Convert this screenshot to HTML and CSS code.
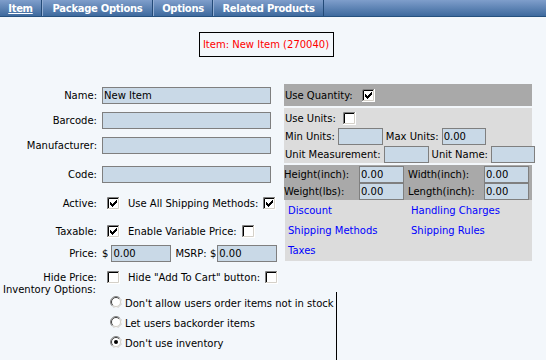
FILE: index.html
```html
<!DOCTYPE html>
<html>
<head>
<meta charset="utf-8">
<title>Item</title>
<link rel="stylesheet" href="styles.css">
</head>
<body>
<nav class="tabs">
  <a class="tab tab-item current" href="#">Item</a>
  <a class="tab tab-pkg" href="#">Package Options</a>
  <a class="tab tab-opt" href="#">Options</a>
  <a class="tab tab-rel" href="#">Related Products</a>
</nav>

<div class="title-row"><div class="title-box">Item: New Item (270040)</div></div>

<div class="main">
  <div class="left">
    <div class="row gap-3"><span class="lbl">Name:</span><input class="txt w169" value="New Item"></div>
    <div class="row gap-8"><span class="lbl">Barcode:</span><input class="txt w169" value=""></div>
    <div class="row gap-8"><span class="lbl">Manufacturer:</span><input class="txt w169" value=""></div>
    <div class="row gap-12"><span class="lbl">Code:</span><input class="txt w169" value=""></div>
    <div class="row gap-12"><span class="lbl">Active:</span>
      <svg class="cb first" viewBox="0 0 13 13"><use href="#cb-on"/></svg>
      <span class="after">Use All Shipping Methods:</span>
      <svg class="cb last" viewBox="0 0 13 13"><use href="#cb-on"/></svg>
    </div>
    <div class="row gap-11"><span class="lbl">Taxable:</span>
      <svg class="cb first" viewBox="0 0 13 13"><use href="#cb-on"/></svg>
      <span class="after">Enable Variable Price:</span>
      <svg class="cb last" viewBox="0 0 13 13"><use href="#cb-off"/></svg>
    </div>
    <div class="row gap-5"><span class="lbl">Price:</span>
      <span>$</span><input class="txt w60 cur" value="0.00">
      <span class="msrp">MSRP: $</span><input class="txt w60 cur2" value="0.00">
    </div>
    <div class="row gap-7"><span class="lbl">Hide Price:</span>
      <svg class="cb first" viewBox="0 0 13 13"><use href="#cb-off"/></svg>
      <span class="after">Hide "Add To Cart" button:</span>
      <svg class="cb last" viewBox="0 0 13 13"><use href="#cb-off"/></svg>
    </div>
  </div>

  <div class="right">
    <div class="band-dark band-q">Use Quantity:<svg class="cb q" viewBox="0 0 13 13"><use href="#cb-on"/></svg></div>
    <div class="band-light band-u">
      <div class="urow urow1">Use Units:<svg class="cb u" viewBox="0 0 13 13"><use href="#cb-off"/></svg></div>
      <div class="urow urow2">Min Units:<input class="txt w45 in" value=""><span class="sp">Max Units:</span><input class="txt w44 in" value="0.00"></div>
      <div class="urow urow3">Unit Measurement:<input class="txt w45 in" value=""><span class="sp">Unit Name:</span><input class="txt w44 in" value=""></div>
    </div>
    <div class="band-dark band-d">
      <span>Height(inch):</span><input class="txt dim" value="0.00"><span></span><span>Width(inch):</span><input class="txt dim" value="0.00">
      <span>Weight(lbs):</span><input class="txt dim" value="0.00"><span></span><span>Length(inch):</span><input class="txt dim" value="0.00">
    </div>
    <div class="band-light band-l">
      <a href="#">Discount</a><a href="#">Handling Charges</a>
      <a href="#">Shipping Methods</a><a href="#">Shipping Rules</a>
      <a href="#">Taxes</a>
    </div>
  </div>
</div>

<div class="inventory">
  <div class="inv-label">Inventory Options:</div>
  <div class="inv-list">
    <div class="opt"><svg class="rd" viewBox="0 0 12 12"><use href="#rd-off"/></svg>Don't allow users order items not in stock</div>
    <div class="opt"><svg class="rd" viewBox="0 0 12 12"><use href="#rd-off"/></svg>Let users backorder items</div>
    <div class="opt"><svg class="rd" viewBox="0 0 12 12"><use href="#rd-on"/></svg>Don't use inventory</div>
  </div>
</div>

<svg class="defs" xmlns="http://www.w3.org/2000/svg">
  <symbol id="cb-off" viewBox="0 0 13 13">
    <rect width="13" height="13" fill="#fff"/>
    <path d="M0.5 13V0.5H13" fill="none" stroke="#808080"/>
    <path d="M1.5 12V1.5H12" fill="none" stroke="#000"/>
    <path d="M0 12.5H12.5V0" fill="none" stroke="#fff"/>
    <path d="M1 11.5H11.5V1" fill="none" stroke="#d4d0c8"/>
  </symbol>
  <symbol id="cb-on" viewBox="0 0 13 13">
    <rect width="13" height="13" fill="#fff"/>
    <path d="M0.5 13V0.5H13" fill="none" stroke="#808080"/>
    <path d="M1.5 12V1.5H12" fill="none" stroke="#000"/>
    <path d="M0 12.5H12.5V0" fill="none" stroke="#fff"/>
    <path d="M1 11.5H11.5V1" fill="none" stroke="#d4d0c8"/>
    <g fill="#000">
      <rect x="3" y="5" width="1" height="3"/>
      <rect x="4" y="6" width="1" height="3"/>
      <rect x="5" y="7" width="1" height="3"/>
      <rect x="6" y="6" width="1" height="3"/>
      <rect x="7" y="5" width="1" height="3"/>
      <rect x="8" y="4" width="1" height="3"/>
      <rect x="9" y="3" width="1" height="3"/>
    </g>
  </symbol>
  <symbol id="rd-off" viewBox="0 0 12 12">
    <circle cx="6" cy="6" r="5.5" fill="#fff" stroke="#808080"/>
    <path d="M2.1 9.9A5.5 5.5 0 0 0 9.9 2.1" fill="none" stroke="#fff"/>
    <path d="M2.8 9.2A4.5 4.5 0 0 1 9.2 2.8" fill="none" stroke="#404040"/>
    <path d="M2.8 9.2A4.5 4.5 0 0 0 9.2 2.8" fill="none" stroke="#d4d0c8"/>
  </symbol>
  <symbol id="rd-on" viewBox="0 0 12 12">
    <circle cx="6" cy="6" r="5.5" fill="#fff" stroke="#808080"/>
    <path d="M2.1 9.9A5.5 5.5 0 0 0 9.9 2.1" fill="none" stroke="#fff"/>
    <path d="M2.8 9.2A4.5 4.5 0 0 1 9.2 2.8" fill="none" stroke="#404040"/>
    <path d="M2.8 9.2A4.5 4.5 0 0 0 9.2 2.8" fill="none" stroke="#d4d0c8"/>
    <circle cx="6" cy="6" r="2" fill="#000"/>
  </symbol>
</svg>
</body>
</html>
```
FILE: styles.css
```css
* { box-sizing: border-box; }
html, body { margin: 0; padding: 0; }
body {
  width: 546px;
  height: 360px;
  overflow: hidden;
  background: #f3f7fb;
  font-family: "DejaVu Sans", Verdana, sans-serif;
  font-size: 10px;
  color: #000;
}
a { color: #0000ff; text-decoration: none; }

/* tabs */
.tabs {
  display: flex;
  height: 17px;
  background: linear-gradient(#7f9ecb, #3e6a9e);
  border-bottom: 1px solid #26517f;
}
.tab {
  display: flex;
  align-items: center;
  justify-content: center;
  height: 16px;
  color: #fff;
  font-weight: bold;
  letter-spacing: -0.3px;
  border-right: 1px solid #234a77;
}
.tab + .tab { border-left: 1px solid #93aed3; }
.tab-item { width: 42px; }
.tab-pkg { width: 111px; }
.tab-opt { width: 60px; }
.tab-rel { width: 111px; }
.current { text-decoration: underline; }

/* title */
.title-row {
  display: flex;
  justify-content: center;
  width: 532px;
  margin-top: 15px;
}
.title-box {
  width: 135px;
  height: 25px;
  border: 1px solid #000;
  color: #ff0000;
  display: flex;
  align-items: center;
  justify-content: center;
  white-space: nowrap;
}

/* main */
.main {
  display: flex;
  margin-top: 27px;
  height: 199px;
}
.left { width: 284px; flex: none; }
.right { width: 248px; flex: none; }

.row { display: flex; align-items: center; height: 17px; white-space: nowrap; }
.gap-3 { margin-top: 3px; }
.gap-5 { margin-top: 5px; }
.gap-7 { margin-top: 7px; }
.gap-8 { margin-top: 8px; }
.gap-11 { margin-top: 11px; }
.gap-12 { margin-top: 12px; }
.lbl { width: 97px; flex: none; text-align: right; margin-right: 5px; }

.txt {
  height: 17px;
  margin: 0;
  border: 1px solid #7f7f7f;
  background: #c9d9e7;
  font: inherit;
  color: #000;
  padding: 0 1px;
  outline: none;
}
.w169 { width: 169px; }
.w60 { width: 60px; }
.w45 { width: 45px; }
.w44 { width: 44px; }
.cur { margin-left: 3px; }
.cur2 { margin-left: 1px; }
.msrp { margin-left: 4px; }

.cb { width: 13px; height: 13px; flex: none; display: block; }
.cb.first { margin-left: 5px; }
.cb.last { margin-left: 5px; }
.after { margin-left: 8px; }

/* right panel */
.band-dark { background: #a9a9a9; }
.band-light { background: #dcdcdc; }
.band-q {
  height: 22px;
  display: flex;
  align-items: center;
  padding-left: 1px;
}
.cb.q { margin-left: 9px; }
.band-u {
  margin-top: 2px;
  height: 55px;
  padding-top: 2px;
}
.urow { display: flex; align-items: center; height: 17px; padding-left: 1px; white-space: nowrap; }
.urow1 { height: 16px; }
.urow2 { margin-top: 2px; }
.urow3 { margin-top: 1px; }
.cb.u { margin-left: 7px; }
.in { margin-left: 3px; }
.sp { margin-left: 3px; }

.band-d {
  margin-top: 2px;
  height: 35px;
  padding-top: 1px;
  display: grid;
  grid-template-columns: 75px 45px 4px 76px 45px;
  grid-template-rows: 17px 17px;
  align-items: center;
  white-space: nowrap;
}
.dim { width: 45px; }

.band-l {
  margin-left: 1px;
  height: 61px;
  padding: 1px 0 0 3px;
  display: grid;
  grid-template-columns: 123px auto;
  grid-auto-rows: 20px;
  line-height: 20px;
  white-space: nowrap;
}

/* inventory */
.inventory { display: flex; }
.inv-label { width: 110px; flex: none; padding: 1px 0 0 3px; line-height: 12px; white-space: nowrap; }
.inv-list {
  margin-top: 9px;
  width: 227px;
  flex: none;
  border-right: 1px solid #000;
  padding: 2px 0 10px;
}
.opt { line-height: 20px; white-space: nowrap; }
.rd { width: 12px; height: 12px; vertical-align: -1px; margin-right: 3px; }

.defs { display: none; }
```
